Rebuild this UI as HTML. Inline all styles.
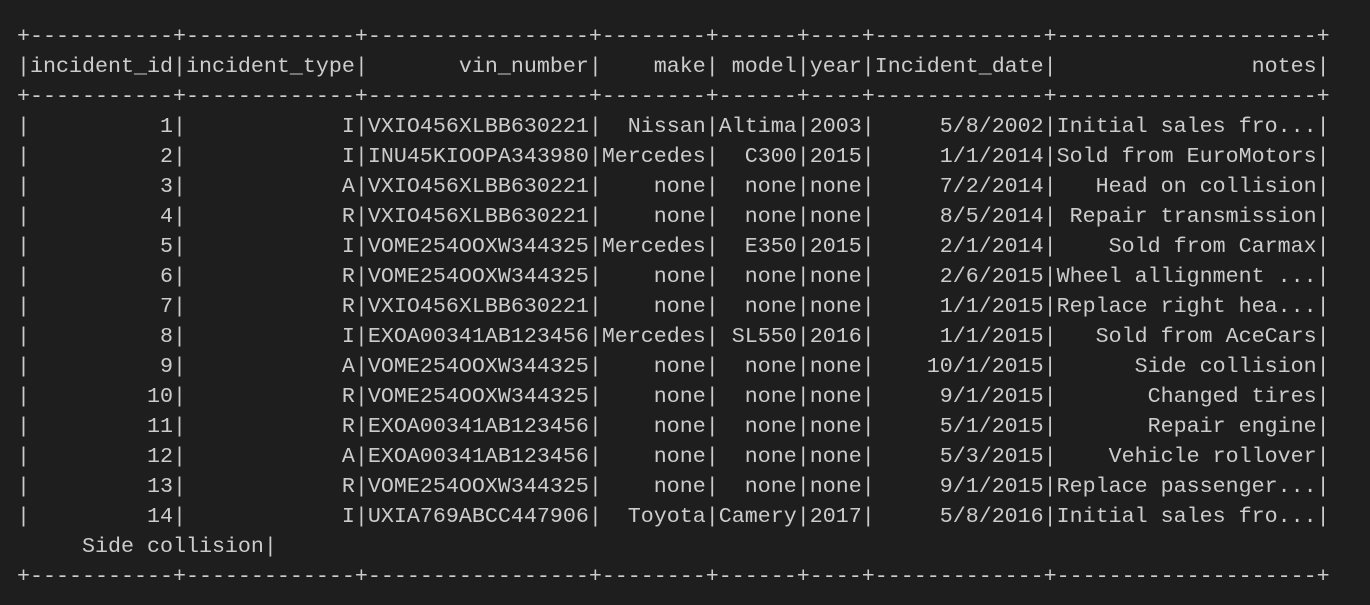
<!DOCTYPE html>
<html><head><meta charset="utf-8"><style>
html,body{margin:0;padding:0;background:#1e1e1e;width:1370px;height:605px;overflow:hidden}
pre{position:absolute;left:17px;top:22px;margin:0;font-family:"Liberation Mono","DejaVu Sans Mono",monospace;font-size:21.67px;line-height:30px;color:#cccccc;white-space:pre}
</style></head><body><pre>+-----------+-------------+-----------------+--------+------+----+-------------+--------------------+
|incident_id|incident_type|       vin_number|    make| model|year|Incident_date|               notes|
+-----------+-------------+-----------------+--------+------+----+-------------+--------------------+
|          1|            I|VXIO456XLBB630221|  Nissan|Altima|2003|     5/8/2002|Initial sales fro...|
|          2|            I|INU45KIOOPA343980|Mercedes|  C300|2015|     1/1/2014|Sold from EuroMotors|
|          3|            A|VXIO456XLBB630221|    none|  none|none|     7/2/2014|   Head on collision|
|          4|            R|VXIO456XLBB630221|    none|  none|none|     8/5/2014| Repair transmission|
|          5|            I|VOME254OOXW344325|Mercedes|  E350|2015|     2/1/2014|    Sold from Carmax|
|          6|            R|VOME254OOXW344325|    none|  none|none|     2/6/2015|Wheel allignment ...|
|          7|            R|VXIO456XLBB630221|    none|  none|none|     1/1/2015|Replace right hea...|
|          8|            I|EXOA00341AB123456|Mercedes| SL550|2016|     1/1/2015|   Sold from AceCars|
|          9|            A|VOME254OOXW344325|    none|  none|none|    10/1/2015|      Side collision|
|         10|            R|VOME254OOXW344325|    none|  none|none|     9/1/2015|       Changed tires|
|         11|            R|EXOA00341AB123456|    none|  none|none|     5/1/2015|       Repair engine|
|         12|            A|EXOA00341AB123456|    none|  none|none|     5/3/2015|    Vehicle rollover|
|         13|            R|VOME254OOXW344325|    none|  none|none|     9/1/2015|Replace passenger...|
|         14|            I|UXIA769ABCC447906|  Toyota|Camery|2017|     5/8/2016|Initial sales fro...|
     Side collision|
+-----------+-------------+-----------------+--------+------+----+-------------+--------------------+</pre></body></html>
